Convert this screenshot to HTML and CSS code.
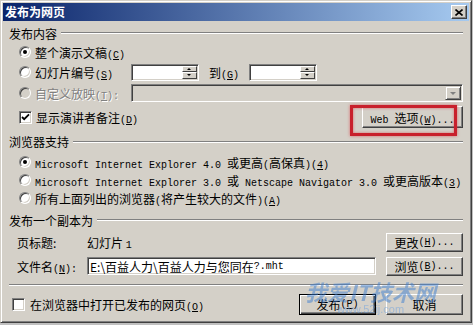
FILE: index.html
```html
<!DOCTYPE html>
<html>
<head>
  <meta charset="utf-8">
  <title>发布为网页</title>
  <link rel="stylesheet" href="styles.css">
</head>
<body>
  <div class="window">
    <div class="titlebar">
      <span class="title">发布为网页</span>
      <span class="close">
        <svg width="8" height="7" viewBox="0 0 8 7"><path d="M0.5 0.5 L7.5 6.5 M7.5 0.5 L0.5 6.5" stroke="#000" stroke-width="1.6" fill="none"/></svg>
      </span>
    </div>

    <div class="content">
      <!-- 发布内容 -->
      <div class="group"><span>发布内容</span><i></i></div>

      <div class="row opt r1">
        <span class="radio on"></span>
        <span class="lbl">整个演示文稿<span class="k">(<u>C</u>)</span></span>
      </div>

      <div class="row opt r2">
        <span class="radio"></span>
        <span class="lbl fixed">幻灯片编号<span class="k">(<u>S</u>)</span></span>
        <span class="spin">
          <span class="field"></span>
          <span class="arrows"><b class="up"></b><b class="down"></b></span>
        </span>
        <span class="to">到<span class="k">(<u>G</u>)</span></span>
        <span class="spin">
          <span class="field"></span>
          <span class="arrows"><b class="up"></b><b class="down"></b></span>
        </span>
      </div>

      <div class="row opt r3 disabled">
        <span class="radio off"></span>
        <span class="lbl fixed">自定义放映<span class="k">(<u>T</u>):</span></span>
        <span class="combo">
          <span class="field"></span>
          <span class="drop"><b></b></span>
        </span>
      </div>

      <div class="row opt r4">
        <span class="check on">
          <svg width="9" height="9" viewBox="0 0 9 9"><path d="M1 4 L3.2 6.2 L8 1.4" stroke="#000" stroke-width="1.8" fill="none"/></svg>
        </span>
        <span class="lbl">显示演讲者备注<span class="k">(<u>D</u>)</span></span>
        <span class="btn web"><span><span class="k">Web </span>选项<span class="k">(<u>W</u>)...</span></span></span>
      </div>

      <!-- 浏览器支持 -->
      <div class="group g2"><span>浏览器支持</span><i></i></div>

      <div class="row opt b">
        <span class="radio on"></span>
        <span class="lbl"><span class="k">Microsoft Internet Explorer 4.0 </span>或更高<span class="k">(</span>高保真<span class="k">)(<u>4</u>)</span></span>
      </div>
      <div class="row opt b">
        <span class="radio"></span>
        <span class="lbl"><span class="k">Microsoft Internet Explorer 3.0 </span>或<span class="k"> Netscape Navigator 3.0 </span>或更高版本<span class="k">(<u>3</u>)</span></span>
      </div>
      <div class="row opt b">
        <span class="radio"></span>
        <span class="lbl">所有上面列出的浏览器<span class="k">(</span>将产生较大的文件<span class="k">)(<u>A</u>)</span></span>
      </div>

      <!-- 发布一个副本为 -->
      <div class="group g3"><span>发布一个副本为</span><i></i></div>

      <div class="row copy t">
        <span class="name">页标题:</span>
        <span class="val">幻灯片 <span class="k">1</span></span>
        <span class="btn side">更改<span class="k">(<u>H</u>)...</span></span>
      </div>
      <div class="row copy f">
        <span class="name">文件名<span class="k">(<u>N</u>):</span></span>
        <span class="edit">E:\百益人力\百益人力与您同在<span class="k">?.mht</span></span>
        <span class="btn side">浏览<span class="k">(<u>B</u>)...</span></span>
      </div>

      <div class="sep"></div>

      <div class="row foot">
        <span class="check"></span>
        <span class="lbl">在浏览器中打开已发布的网页<span class="k">(<u>O</u>)</span></span>
        <span class="btn default">发布<span class="k">(<u>P</u>)</span></span>
        <span class="btn side">取消</span>
      </div>
    </div>

    <!-- highlight drawn over the Web options button -->
    <div class="mark"></div>
    <div class="wm">
      <span class="wm-big">我爱IT技术网</span>
      <span class="wm-small">www.52ij.com</span>
    </div>
  </div>
</body>
</html>
```

FILE: styles.css
```css
/* classic dialog */
body {
  margin: 0;
  background: #c0c0c0;
  font-family: "Noto Sans CJK SC", "Liberation Sans", sans-serif;
  font-size: 12px;
  color: #000;
}

.window {
  position: relative;
  box-sizing: border-box;
  width: 472px;
  height: 323px;
  padding: 2px;
  background: #d4d0c8;
  border: 1px solid;
  border-color: #d4d0c8 #404040 #404040 #d4d0c8;
  box-shadow: inset 1px 1px #fff, inset -1px -1px #808080;
}

.titlebar {
  height: 18px;
  display: flex;
  align-items: center;
  justify-content: space-between;
  padding: 0 2px 0 2px;
  background: linear-gradient(to right, #0a246a, #a6caf0);
}

.title {
  color: #fff;
  font-weight: bold;
  font-size: 12px;
  line-height: 18px;
}

.close {
  box-sizing: border-box;
  width: 16px;
  height: 14px;
  display: flex;
  align-items: center;
  justify-content: center;
  background: #d4d0c8;
  border: 1px solid;
  border-color: #fff #404040 #404040 #fff;
  box-shadow: inset -1px -1px #808080;
}

.content {
  padding: 3px 6px 0 6px;
}

.k {
  font-family: "Liberation Mono", monospace;
  font-size: 10px;
  white-space: pre;
}

/* group heading with etched rule */
.group {
  display: flex;
  align-items: center;
  height: 18px;
}

.group span {
  padding: 0 4px 0 0;
}

.group i {
  flex: 1;
  height: 0;
  border-top: 1px solid #808080;
  border-bottom: 1px solid #fff;
}

.g2 { height: 23px; }
.g3 { height: 26px; }

.row {
  display: flex;
  align-items: center;
}

.opt { padding-left: 10px; }
.r1 { height: 20px; }
.r2 { height: 20px; }
.r3 { height: 22px; }
.r4 { height: 26px; }
.b { height: 18px; }

.lbl { margin-left: 4px; white-space: nowrap; }
.fixed { width: 96px; flex-shrink: 0; }

.disabled .lbl {
  color: #808080;
  text-shadow: 1px 1px #fff;
}

/* radio buttons */
.radio {
  position: relative;
  box-sizing: border-box;
  width: 12px;
  height: 12px;
  border-radius: 50%;
  background: #fff;
  border: 1px solid;
  border-color: #808080 #fff #fff #808080;
  box-shadow: inset 1px 1px #404040, inset -1px -1px #d4d0c8;
  flex-shrink: 0;
}

.radio.on::after {
  content: "";
  position: absolute;
  left: 3px;
  top: 3px;
  width: 4px;
  height: 4px;
  border-radius: 50%;
  background: #000;
}

.radio.off { background: #d4d0c8; }

/* check boxes */
.check {
  box-sizing: border-box;
  width: 13px;
  height: 13px;
  background: #fff;
  border: 1px solid;
  border-color: #808080 #fff #fff #808080;
  box-shadow: inset 1px 1px #404040, inset -1px -1px #d4d0c8;
  display: flex;
  align-items: center;
  justify-content: center;
  flex-shrink: 0;
}

/* sunken fields */
.spin, .combo, .edit {
  box-sizing: border-box;
  display: flex;
  background: #fff;
  border: 1px solid;
  border-color: #808080 #fff #fff #808080;
  box-shadow: inset 1px 1px #404040, inset -1px -1px #d4d0c8;
  padding: 2px;
}

.spin {
  width: 68px;
  height: 17px;
}

.spin .field { flex: 1; }

.arrows {
  width: 15px;
  display: flex;
  flex-direction: column;
  margin: -1px -1px -1px 0;
}

.arrows b {
  flex: 1;
  position: relative;
  background: #d4d0c8;
  border: 1px solid;
  border-color: #fff #404040 #404040 #fff;
}

.arrows b::after {
  content: "";
  position: absolute;
  left: 4px;
  top: 1px;
  border-left: 2px solid transparent;
  border-right: 2px solid transparent;
}

.arrows .up::after { border-bottom: 2px solid #000; }
.arrows .down::after { border-top: 2px solid #000; }

.to {
  margin: 0 10px;
  white-space: nowrap;
}

.combo {
  flex: 1;
  height: 18px;
  background: #d4d0c8;
}

.combo .field { flex: 1; }

.drop {
  width: 16px;
  position: relative;
  margin: -1px -1px -1px 0;
  box-sizing: border-box;
  background: #d4d0c8;
  border: 1px solid;
  border-color: #d4d0c8 #404040 #404040 #d4d0c8;
  box-shadow: inset 1px 1px #fff, inset -1px -1px #808080;
}

.drop b {
  position: absolute;
  left: 4px;
  top: 5px;
  border-left: 3px solid transparent;
  border-right: 3px solid transparent;
  border-top: 3px solid #808080;
}

/* push buttons */
.btn {
  box-sizing: border-box;
  height: 22px;
  display: flex;
  align-items: center;
  justify-content: center;
  background: #d4d0c8;
  border: 1px solid;
  border-color: #fff #404040 #404040 #fff;
  box-shadow: inset -1px -1px #808080;
  white-space: nowrap;
}

.web {
  width: 101px;
  margin-left: auto;
}

.side {
  width: 77px;
  height: 19px;
  margin-left: 10px;
}

.default {
  width: 77px;
  height: 21px;
  margin-left: auto;
  border: 1px solid #000;
  box-shadow: inset 1px 1px #fff, inset -1px -1px #404040, inset -2px -2px #808080;
}

.foot .side { height: 21px; }

/* copy section */
.copy { padding-left: 8px; }
.t { height: 18px; }
.f { height: 20px; margin-top: 5px; }

.name { width: 70px; flex-shrink: 0; white-space: nowrap; }

.val { flex: 1; }

.edit {
  width: 289px;
  height: 18px;
  align-items: center;
  padding: 0 2px;
  white-space: nowrap;
}

.sep {
  height: 0;
  margin: 8px 0 6px;
  border-top: 1px solid #808080;
  border-bottom: 1px solid #fff;
}

.foot {
  height: 24px;
  padding-left: 3px;
}

.foot .lbl { margin-left: 5px; }

/* red highlight over the Web options button */
.mark {
  position: absolute;
  left: 349px;
  top: 104px;
  width: 107px;
  height: 31px;
  box-sizing: border-box;
  border: 3px solid #c8202c;
  box-shadow: 0 0 3px rgba(220, 40, 50, 0.6), inset 0 0 3px rgba(220, 40, 50, 0.6);
}

/* faint watermark */
.wm {
  position: absolute;
  left: 304px;
  top: 278px;
  display: flex;
  flex-direction: column;
  align-items: center;
  pointer-events: none;
  opacity: 0.5;
}

.wm-big {
  font-size: 22px;
  font-weight: bold;
  font-style: italic;
  color: #3f7fd0;
  line-height: 24px;
}

.wm-small {
  font-family: "Liberation Sans", sans-serif;
  font-size: 11px;
  color: #6aa0e0;
  line-height: 12px;
}
```
